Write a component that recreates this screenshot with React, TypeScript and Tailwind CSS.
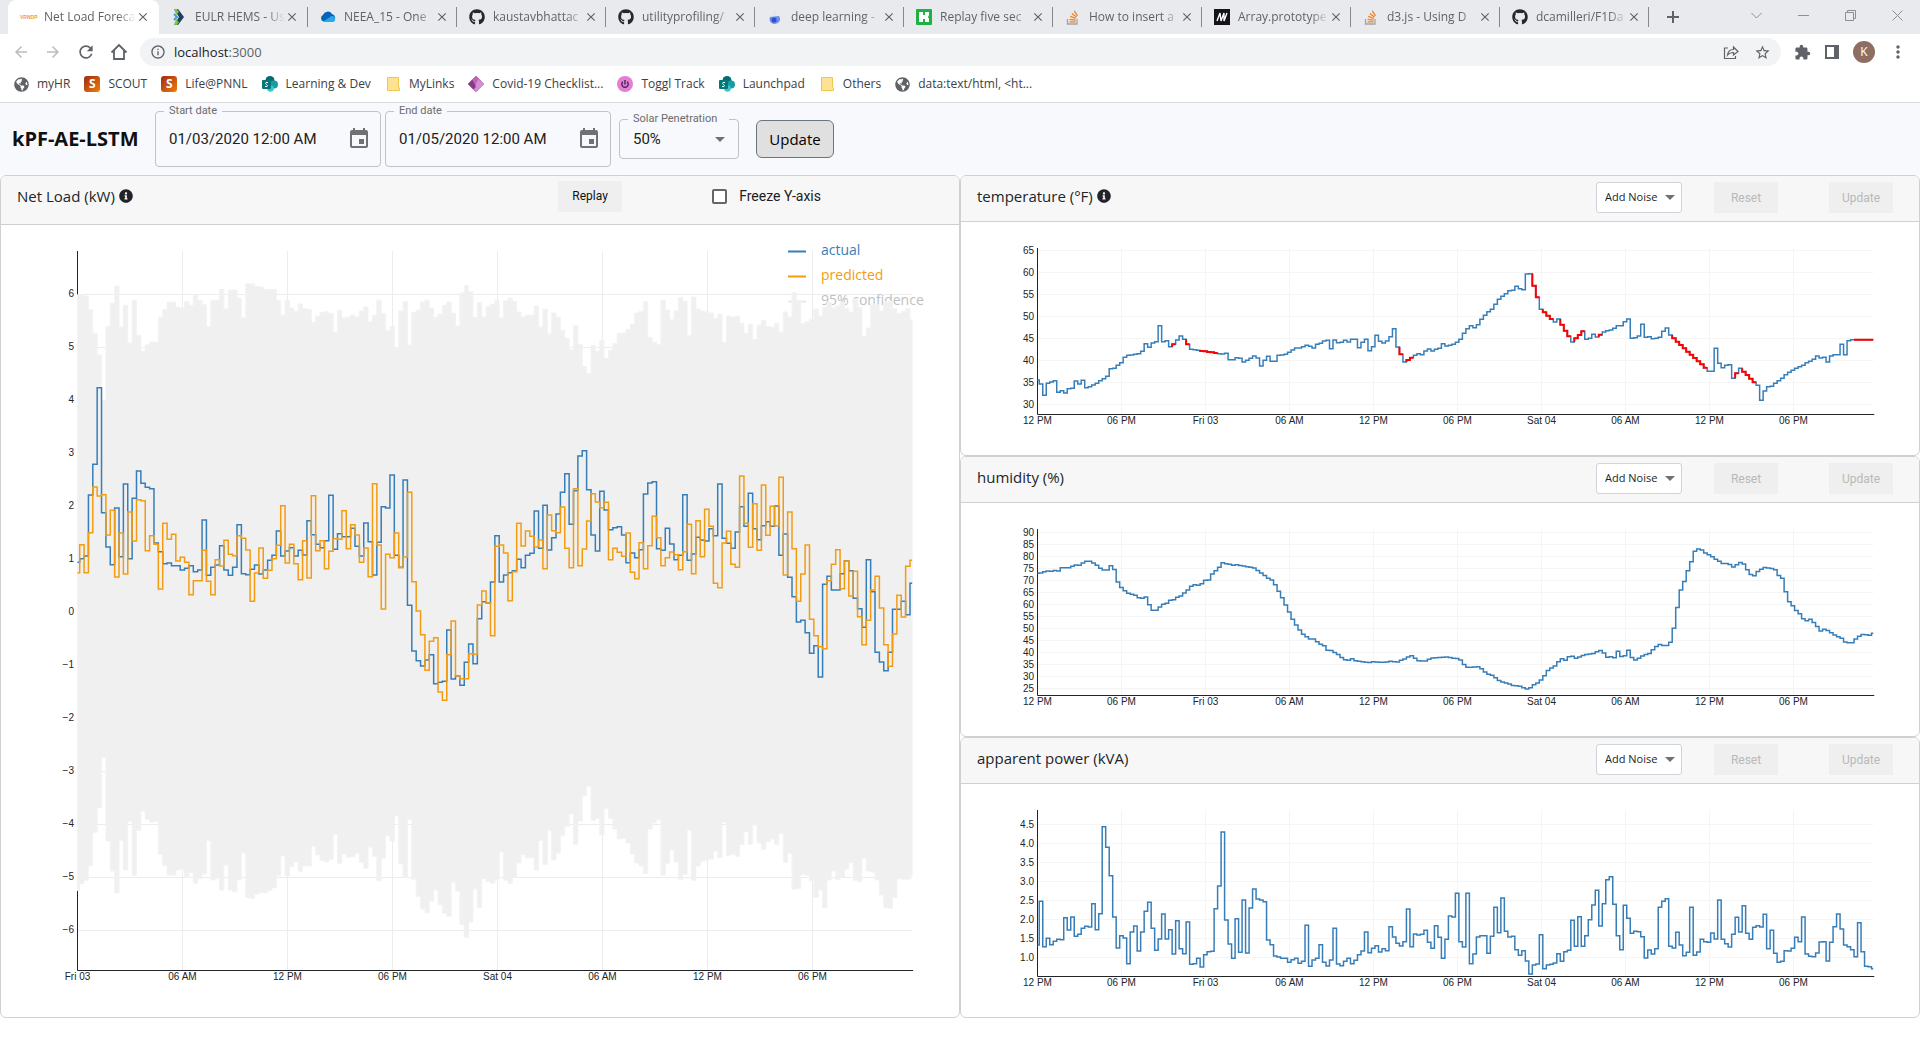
import React from "react";
import { FaGithub, FaGlobeAmericas, FaInfoCircle } from "react-icons/fa";
import {
  MdArrowBack,
  MdArrowForward,
  MdClose,
  MdEvent,
  MdExtension,
  MdInfoOutline,
  MdMoreVert,
  MdRefresh,
  MdStarBorder,
} from "react-icons/md";

const BLUE = "#377eb8";
const ORANGE = "#f39c12";

/* ---------- series: vertical positions on a three-per-pixel plot grid ---------- */

const ACTUAL = [
  997, 986, 978, 795, 703, 473, 848, 951, 1004, 834, 980, 762, 986, 805, 723, 760, 772, 776, 939, 965, 1001, 999, 1007, 1007,
  1020, 1015, 1007, 1025, 1020, 870, 1036, 1012, 1005, 947, 1020, 1036, 1012, 884, 1031, 1034, 1018, 1005, 1032, 1020, 991, 976, 903, 978,
  963, 953, 978, 961, 975, 872, 914, 943, 953, 932, 796, 958, 911, 920, 920, 895, 949, 978, 879, 935, 1035, 937, 830, 834,
  735, 976, 1012, 750, 1126, 1263, 1292, 1308, 1290, 1274, 1361, 1357, 1354, 1200, 1347, 1338, 1366, 1297, 1242, 1301, 1166, 1115, 1119, 1056,
  917, 1056, 1035, 1028, 1022, 988, 1013, 976, 970, 843, 955, 826, 960, 923, 852, 787, 731, 883, 782, 678, 662, 779, 915, 963,
  784, 840, 899, 893, 890, 915, 998, 969, 983, 959, 792, 759, 755, 956, 961, 895, 942, 989, 976, 794, 991, 972, 922, 930,
  933, 896, 917, 762, 925, 940, 955, 906, 830, 889, 790, 896, 929, 887, 875, 889, 828, 976, 912, 1042, 1100, 1176, 1171, 1208,
  1270, 1247, 1341, 1063, 1039, 1080, 1080, 1031, 992, 1022, 1105, 1136, 1192, 989, 1085, 1267, 1296, 1322, 1267, 1138, 1138, 1114, 1154, 1060,
];

const PREDICTED = [
  1028, 944, 1028, 908, 771, 798, 794, 915, 841, 1041, 909, 1032, 846, 933, 809, 812, 962, 917, 943, 1077, 880, 928, 913, 993,
  982, 997, 1094, 1052, 1052, 961, 1054, 1094, 989, 1008, 931, 973, 977, 917, 925, 960, 1114, 1029, 954, 1045, 1021, 986, 946, 827,
  999, 943, 1001, 1049, 932, 1044, 797, 962, 932, 1016, 964, 926, 928, 842, 956, 884, 915, 997, 954, 1040, 761, 945, 1137, 973,
  983, 909, 1013, 981, 787, 1055, 1143, 1214, 1321, 1234, 1223, 1386, 1411, 1274, 1173, 1338, 1346, 1346, 1271, 1273, 1125, 1083, 1119, 1217,
  949, 945, 969, 1112, 1025, 880, 948, 903, 919, 951, 930, 1016, 855, 902, 908, 831, 955, 1013, 776, 1007, 957, 873, 791, 816,
  833, 817, 989, 955, 967, 979, 909, 1027, 1046, 938, 1016, 947, 859, 923, 1007, 983, 966, 974, 1019, 965, 883, 1031, 872, 980,
  838, 889, 1060, 1073, 939, 904, 1003, 1012, 738, 880, 952, 821, 961, 765, 916, 829, 887, 742, 1035, 846, 956, 1114, 1032, 945,
  1168, 1217, 1250, 1256, 1052, 1003, 959, 1076, 993, 1098, 1024, 1160, 1244, 1171, 1080, 1039, 1134, 1244, 1309, 1212, 1096, 1161, 1009, 991,
];

const BAND_TOP = [
  194, 194, 198, 239, 310, 375, 510, 289, 220, 168, 291, 226, 339, 212, 316, 364, 344, 336, 336, 261, 238, 216, 216, 231,
  234, 214, 226, 196, 211, 224, 290, 212, 210, 178, 237, 180, 180, 204, 263, 161, 162, 169, 171, 178, 178, 178, 212, 255,
  212, 234, 244, 222, 236, 238, 277, 259, 247, 245, 250, 307, 241, 264, 261, 255, 261, 243, 231, 275, 256, 210, 250, 302,
  290, 352, 243, 215, 345, 247, 240, 216, 210, 234, 262, 252, 226, 216, 250, 288, 189, 166, 185, 262, 217, 261, 230, 223,
  210, 263, 212, 204, 215, 246, 261, 255, 255, 228, 291, 238, 312, 249, 262, 301, 325, 359, 287, 343, 409, 430, 346, 363,
  331, 385, 361, 340, 309, 309, 298, 283, 249, 244, 215, 322, 337, 344, 210, 240, 269, 243, 202, 214, 317, 201, 237, 243,
  246, 249, 265, 252, 337, 258, 261, 258, 280, 310, 282, 328, 285, 271, 289, 292, 280, 307, 246, 261, 188, 212, 280, 275,
  267, 237, 258, 232, 217, 234, 228, 217, 235, 246, 207, 232, 320, 294, 222, 225, 243, 215, 215, 236, 251, 244, 236, 269,
];

const BAND_BOTTOM = [
  752, 731, 721, 677, 577, 503, 352, 603, 693, 759, 602, 690, 544, 706, 571, 513, 538, 546, 544, 643, 676, 705, 705, 690,
  687, 712, 698, 730, 716, 702, 602, 720, 716, 750, 675, 750, 755, 720, 639, 773, 775, 762, 758, 758, 751, 743, 707, 648,
  708, 680, 666, 694, 678, 678, 618, 644, 662, 666, 658, 583, 670, 642, 652, 650, 640, 667, 685, 621, 649, 722, 655, 587,
  603, 528, 672, 712, 538, 718, 769, 807, 818, 783, 750, 794, 820, 829, 727, 753, 854, 892, 846, 747, 802, 716, 725, 730,
  719, 636, 721, 731, 712, 669, 644, 653, 653, 690, 602, 674, 571, 660, 639, 587, 559, 522, 613, 543, 467, 439, 541, 535,
  585, 506, 535, 567, 597, 595, 609, 642, 669, 678, 700, 567, 549, 539, 705, 670, 630, 666, 718, 703, 570, 721, 678, 664,
  660, 657, 633, 653, 547, 646, 643, 649, 614, 575, 613, 555, 609, 628, 605, 597, 614, 580, 667, 640, 748, 746, 703, 706,
  722, 773, 750, 803, 720, 693, 719, 711, 687, 668, 721, 725, 655, 693, 696, 720, 765, 803, 805, 773, 716, 718, 718, 708,
];

const TEMPERATURE = [
  480, 492, 526, 490, 486, 482, 517, 512, 519, 506, 505, 483, 492, 481, 503, 500, 495, 490, 482, 476, 469, 446, 445, 436,
  428, 412, 406, 405, 403, 401, 394, 371, 382, 369, 365, 317, 365, 362, 380, 373, 360, 348, 358, 373, 388, 389, 391, 393,
  394, 396, 397, 399, 401, 402, 400, 419, 419, 413, 415, 426, 421, 415, 408, 414, 438, 421, 409, 424, 424, 406, 405, 403,
  397, 390, 384, 384, 380, 376, 379, 384, 373, 370, 363, 361, 386, 360, 368, 367, 361, 366, 358, 358, 383, 367, 358, 392,
  380, 346, 364, 369, 363, 350, 326, 381, 403, 426, 420, 413, 406, 401, 404, 393, 387, 393, 388, 385, 371, 378, 376, 373,
  367, 358, 340, 326, 317, 323, 314, 298, 286, 275, 268, 253, 238, 229, 221, 212, 211, 199, 206, 209, 162, 161, 197, 232,
  268, 277, 287, 297, 306, 297, 314, 332, 349, 366, 355, 345, 334, 358, 355, 343, 351, 344, 336, 332, 330, 325, 317, 317,
  305, 297, 355, 353, 348, 313, 352, 350, 356, 355, 352, 334, 324, 345, 355, 365, 375, 385, 395, 404, 414, 424, 433, 443,
  454, 454, 385, 430, 443, 436, 434, 475, 460, 445, 455, 465, 476, 487, 496, 541, 513, 500, 499, 490, 482, 475, 464, 457,
  451, 445, 440, 436, 428, 424, 418, 408, 414, 412, 426, 408, 404, 404, 373, 404, 362, 359, 359, 359, 359, 359, 359, 359,
];

/* sample ranges of the temperature series that were filled in by interpolation */
const FILLED: [number, number][] = [
  [39, 39], [43, 43], [47, 51], [104, 104], [106, 107], [142, 143], [145, 147], [150, 152],
  [154, 156], [161, 161], [182, 191], [200, 200], [202, 205], [234, 239],
];

/* [position, height] knots of the humidity curve */
const HUMIDITY_KNOTS: [number, number][] = [
  [127, 220], [133, 219], [139, 215], [145, 213], [151, 214], [156, 211], [162, 213], [165, 203], [180, 203], [183, 200],
  [188, 195], [197, 196], [204, 184], [212, 183], [217, 188], [222, 191], [227, 202], [233, 208], [240, 214], [246, 196],
  [252, 203], [256, 238], [262, 259], [269, 271], [273, 278], [280, 282], [287, 286], [294, 295], [297, 297], [303, 287],
  [308, 307], [314, 331], [321, 331], [327, 321], [332, 313], [338, 310], [343, 301], [350, 299], [355, 292], [361, 288],
  [367, 279], [372, 271], [377, 260], [383, 254], [390, 256], [395, 252], [401, 241], [406, 243], [412, 223], [418, 213],
  [424, 202], [429, 188], [435, 191], [441, 193], [447, 196], [453, 194], [460, 197], [470, 200], [480, 203], [486, 210],
  [491, 217], [497, 225], [503, 234], [509, 238], [515, 253], [520, 270], [526, 290], [531, 310], [537, 331], [543, 355],
  [549, 373], [554, 387], [560, 401], [566, 409], [572, 417], [578, 417], [583, 424], [589, 432], [595, 436], [600, 451],
  [606, 451], [612, 457], [617, 462], [623, 471], [628, 478], [634, 482], [640, 475], [646, 482], [658, 485], [668, 488],
  [675, 485], [685, 487], [700, 486], [705, 483], [714, 487], [720, 481], [726, 478], [732, 471], [738, 467], [743, 474],
  [749, 482], [760, 484], [766, 478], [772, 474], [783, 473], [795, 471], [805, 474], [817, 477], [823, 492], [828, 502],
  [838, 502], [845, 499], [852, 506], [857, 515], [863, 522], [870, 526], [875, 533], [880, 541], [887, 546], [895, 550],
  [903, 556], [915, 559], [922, 564], [926, 567], [932, 564], [937, 555], [943, 550], [949, 541], [954, 531], [959, 514],
  [965, 505], [971, 501], [977, 487], [983, 475], [988, 484], [994, 471], [1000, 468], [1006, 475], [1012, 471], [1020, 465],
  [1026, 463], [1036, 460], [1041, 455], [1046, 451], [1051, 456], [1057, 472], [1063, 470], [1069, 475], [1074, 450], [1079, 468],
  [1085, 474], [1091, 446], [1097, 471], [1103, 481], [1108, 476], [1114, 469], [1120, 464], [1127, 460], [1131, 451], [1137, 441],
  [1142, 433], [1149, 436], [1154, 438], [1160, 431], [1165, 401], [1171, 334], [1177, 274], [1183, 248], [1188, 218], [1194, 191],
  [1200, 155], [1206, 147], [1212, 150], [1217, 158], [1223, 164], [1229, 170], [1235, 178], [1240, 183], [1245, 191], [1251, 190],
  [1257, 192], [1262, 203], [1268, 196], [1274, 187], [1280, 190], [1285, 205], [1291, 222], [1297, 229], [1303, 215], [1309, 208],
  [1314, 202], [1320, 204], [1331, 206], [1337, 226], [1343, 231], [1348, 268], [1354, 303], [1360, 316], [1366, 331], [1371, 338],
  [1377, 355], [1383, 363], [1388, 356], [1394, 366], [1400, 378], [1406, 393], [1412, 388], [1418, 392], [1423, 398], [1429, 405],
  [1435, 410], [1441, 415], [1446, 426], [1452, 428], [1457, 430], [1463, 418], [1469, 409], [1475, 403], [1487, 406], [1492, 400],
];

const POWER = [
  615, 484, 620, 595, 614, 604, 598, 599, 533, 570, 531, 589, 583, 565, 559, 561, 491, 569, 521, 260, 322, 407, 531, 624,
  587, 594, 671, 576, 558, 633, 576, 514, 487, 565, 631, 597, 522, 597, 569, 642, 542, 626, 641, 546, 673, 671, 655, 681,
  644, 635, 634, 506, 438, 276, 540, 612, 655, 536, 637, 480, 639, 504, 447, 477, 480, 485, 600, 614, 648, 651, 655, 655,
  667, 659, 655, 670, 664, 556, 679, 660, 655, 614, 667, 678, 660, 565, 672, 677, 664, 655, 671, 661, 644, 633, 576, 638,
  625, 617, 636, 626, 632, 560, 591, 610, 618, 605, 507, 620, 582, 585, 583, 571, 607, 625, 557, 592, 655, 598, 528, 531,
  460, 605, 621, 460, 671, 642, 591, 587, 587, 640, 589, 502, 578, 474, 574, 591, 589, 629, 646, 632, 663, 702, 675, 672,
  584, 686, 675, 673, 669, 641, 664, 635, 631, 541, 619, 530, 619, 587, 539, 495, 451, 558, 491, 419, 410, 493, 587, 629,
  496, 535, 580, 574, 575, 590, 654, 630, 642, 626, 502, 484, 476, 619, 624, 577, 615, 647, 637, 502, 646, 636, 598, 605,
  607, 579, 597, 480, 598, 611, 621, 583, 532, 576, 497, 580, 598, 562, 557, 561, 523, 626, 571, 640, 667, 664, 632, 633,
  625, 592, 605, 531, 642, 649, 650, 639, 606, 605, 663, 607, 560, 522, 567, 615, 620, 629, 650, 548, 635, 679, 680, 686,
];

function humiditySeries(count: number) {
  const first = HUMIDITY_KNOTS[0][0];
  const last = HUMIDITY_KNOTS[HUMIDITY_KNOTS.length - 1][0];
  return Array.from({ length: count }, (_, i) => {
    const at = first + ((last - first) * i) / (count - 1);
    let k = 1;
    while (k < HUMIDITY_KNOTS.length - 1 && HUMIDITY_KNOTS[k][0] < at) k++;
    const [x0, y0] = HUMIDITY_KNOTS[k - 1];
    const [x1, y1] = HUMIDITY_KNOTS[k];
    return y0 + ((y1 - y0) * (at - x0)) / (x1 - x0);
  });
}

type Pt = [number, number];

/* step curve: the level changes half way between neighbouring samples */
function stepPoints(ys: number[], x0: number, dx: number, offset: number): Pt[] {
  const pts: Pt[] = [];
  ys.forEach((v, i) => {
    const y = v / 3 + offset;
    pts.push([i === 0 ? x0 : x0 + (i - 0.5) * dx, y]);
    pts.push([i === ys.length - 1 ? x0 + i * dx : x0 + (i + 0.5) * dx, y]);
  });
  return pts;
}

const toPath = (pts: Pt[]) => "M" + pts.map(([x, y]) => `${x.toFixed(2)},${y.toFixed(2)}`).join("L");

const TICK = "font-['Liberation_Sans',sans-serif] text-[10px] fill-[#212529]";
const UI = "font-['Open_Sans',sans-serif]";

/* ---------- charts ---------- */

function NetLoadChart() {
  const x0 = 76.5;
  const dx = 4.37;
  const end = x0 + 191 * dx;
  const axisY = 745.5;
  const top = stepPoints(BAND_TOP, x0, dx, 5);
  const bottom = stepPoints(BAND_BOTTOM, x0, dx, 415).reverse();
  const hours = ["Fri 03", "06 AM", "12 PM", "06 PM", "Sat 04", "06 AM", "12 PM", "06 PM"];
  const levels = [6, 5, 4, 3, 2, 1, 0, -1, -2, -3, -4, -5, -6];
  return (
    <svg viewBox="0 0 958 792" className="block h-auto w-full" role="img" aria-label="Net load chart">
      {hours.map((_, i) => (
        <path key={i} d={`M${x0 + i * 105},26V745`} stroke="#ececec" />
      ))}
      {levels.map((v) => (
        <path key={v} d={`M${x0},${388 - Math.round(v * 53) - 0.5}H${end}`} stroke="#ececec" />
      ))}
      <path d={`M${x0},26V${axisY}H${end + 1}`} fill="none" stroke="#212529" />
      {hours.map((t, i) => (
        <text key={i} x={x0 + i * 105} y={755} textAnchor="middle" className={TICK}>{t}</text>
      ))}
      {levels.map((v) => (
        <text key={v} x={73} y={390 - Math.round(v * 53)} textAnchor="end" className={TICK}>
          {v < 0 ? `−${-v}` : v}
        </text>
      ))}
      <path d="M787,26.5H805" stroke={BLUE} strokeWidth="2" />
      <path d="M787,51.5H805" stroke={ORANGE} strokeWidth="2" />
      <path d="M787,76.5H805" stroke="#e8e8e8" strokeWidth="2" />
      <text x={820} y={30} fill={BLUE} className={`${UI} text-[14px]`}>actual</text>
      <text x={820} y={55} fill={ORANGE} className={`${UI} text-[14px]`}>predicted</text>
      <text x={820} y={80} fill="#c0c0c0" className={`${UI} text-[14px]`}>95% confidence</text>
      <path d={toPath([...top, ...bottom]) + "Z"} fill="#f0f0f0" stroke="#f3f3f3" strokeWidth="1" />
      <path d={toPath(stepPoints(ACTUAL, x0, dx, 5))} fill="none" stroke={BLUE} strokeWidth="1.5" />
      <path d={toPath(stepPoints(PREDICTED, x0, dx, 5))} fill="none" stroke={ORANGE} strokeWidth="1.5" />
    </svg>
  );
}

interface SensorChartProps {
  name: string;
  values: number[];
  offset: number;
  labels: string[];
  firstTick: number;
  tickStep: number;
  filled?: [number, number][];
}

function SensorChart({ name, values, offset, labels, firstTick, tickStep, filled = [] }: SensorChartProps) {
  const x0 = 76.5;
  const dx = 3.497;
  const end = x0 + 239 * dx;
  const axisY = 192.5;
  const hours = ["12 PM", "06 PM", "Fri 03", "06 AM", "12 PM", "06 PM", "Sat 04", "06 AM", "12 PM", "06 PM"];
  const pts = stepPoints(values, x0, dx, offset);
  return (
    <svg viewBox="0 0 958 233" className="block h-auto w-full" role="img" aria-label={`${name} chart`}>
      {hours.map((_, i) => (
        <path key={i} d={`M${Math.floor(x0 + i * 84) + 0.5},26V192`} stroke="#f5f5f5" />
      ))}
      {labels.map((v, i) => (
        <path key={v} d={`M${x0},${firstTick + i * tickStep + 0.5}H${end}`} stroke="#f5f5f5" />
      ))}
      <path d={`M${x0},26V${axisY}H${end + 1}`} fill="none" stroke="#212529" />
      {hours.map((t, i) => (
        <text key={i} x={x0 + i * 84} y={202} textAnchor="middle" className={TICK}>{t}</text>
      ))}
      {labels.map((v, i) => (
        <text key={v} x={73} y={firstTick + i * tickStep + 4} textAnchor="end" className={TICK}>{v}</text>
      ))}
      <path d={toPath(pts)} fill="none" stroke={BLUE} strokeWidth="1.5" />
      {filled.map(([a, b]) => (
        <path key={a} d={toPath(pts.slice(Math.max(0, a * 2 - 1), b * 2 + 2))} fill="none" stroke="#ff0000" strokeWidth="2" />
      ))}
    </svg>
  );
}

/* ---------- browser chrome ---------- */

function VrndpIcon() {
  return <span className="w-4 shrink-0 text-center font-['Liberation_Sans',sans-serif] text-[5px] leading-4 font-bold text-[#f39c3c]">VRNDP</span>;
}

function EulrIcon() {
  return (
    <svg viewBox="0 0 16 16" className="size-4 shrink-0">
      <path d="M3 0h4l6 8-6 8H3l5-8z" fill="#1e3f63" />
      <path d="M3 0h3l2 3-3 3 1 2-1 2 3 3-2 3H3l3-8z" fill="#7cc243" />
      <path d="M3 5l3 3-3 3" fill="none" stroke="#3c9fd6" strokeWidth="2" />
    </svg>
  );
}

function OneDriveIcon() {
  return (
    <svg viewBox="0 0 16 16" className="size-4 shrink-0">
      <path d="M3.500 12.500A3.500 3.500 0 0 1 3 6a5 5 0 0 1 9-1 4 4 0 0 1 1 7.500z" fill="#0364b8" />
      <path d="M5 13a3 3 0 0 1-1-1l6-4a3 3 0 0 1 5 1 3 3 0 0 1-2 4z" fill="#28a8ea" />
    </svg>
  );
}

function FlaskIcon() {
  return (
    <svg viewBox="0 0 16 16" className="size-4 shrink-0">
      <path d="M6 1h3v5l2 4a4 4 0 0 1-8 0l3-4z" fill="#dfe5fb" />
      <path d="M3 8l9-1a5 5 0 0 1-4 8 5 5 0 0 1-5-7z" fill="#6f8df0" />
      <circle cx="7" cy="11" r="2.500" fill="#2f50cc" />
    </svg>
  );
}

function ReplayIcon() {
  return (
    <svg viewBox="0 0 16 16" className="size-4 shrink-0">
      <rect width="16" height="16" rx="1" fill="#1fb141" />
      <path d="M3 3h4v3h2V3h4v3l-1 2 1 2v3H9v-3H7v3H3z" fill="#fff" />
    </svg>
  );
}

function MdnIcon() {
  return (
    <svg viewBox="0 0 16 16" className="size-4 shrink-0">
      <rect width="16" height="16" fill="#15141a" />
      <path d="M3 12l3-8 1 8 3-8 0 8 3-8" fill="none" stroke="#fff" strokeWidth="1.400" />
    </svg>
  );
}

function StackIcon() {
  return (
    <svg viewBox="0 0 16 16" className="size-4 shrink-0" fill="none">
      <path d="M2.500 10v5h9.500v-5" stroke="#a0a4a8" strokeWidth="1.300" />
      <path d="M4.500 12.800h6M4.600 10.300l6 .8M5.200 7.400l5.600 2M6.800 4.400l4.700 3.500M9.300 1.800l3.200 5" stroke="#f48024" strokeWidth="1.300" />
    </svg>
  );
}

const Github = () => <FaGithub className="size-4 shrink-0 text-[#24292f]" />;

const TABS: { title: string; Icon: () => React.ReactElement }[] = [
  { title: "Net Load Foreca", Icon: VrndpIcon },
  { title: "EULR HEMS - Us", Icon: EulrIcon },
  { title: "NEEA_15 - One", Icon: OneDriveIcon },
  { title: "kaustavbhattac", Icon: Github },
  { title: "utilityprofiling/", Icon: Github },
  { title: "deep learning -", Icon: FlaskIcon },
  { title: "Replay five sec", Icon: ReplayIcon },
  { title: "How to insert a", Icon: StackIcon },
  { title: "Array.prototype", Icon: MdnIcon },
  { title: "d3.js - Using D", Icon: StackIcon },
  { title: "dcamilleri/F1Da", Icon: Github },
];

function TabStrip() {
  return (
    <div className="flex h-[34px] items-center bg-[#e8eaed] pl-2">
      {TABS.map(({ title, Icon }, i) => (
        <div
          key={title}
          className={
            i === 0
              ? "flex h-full w-[151px] items-center rounded-t-lg bg-white pr-[9px] pl-3"
              : i === 1
                ? "flex h-5 w-[149px] items-center border-r border-[#85898e] pr-2 pl-3"
                : "flex h-5 w-[149px] items-center border-r border-[#85898e] pr-[7px] pl-3"
          }
        >
          <Icon />
          <span className="ml-2 min-w-0 flex-1 overflow-hidden mask-r-from-80% text-[12px] leading-5 whitespace-nowrap text-[#5f6368]">
            {title}
          </span>
          <button type="button" aria-label={`Close ${title}`} className="text-[#5f6368]">
            <MdClose className="size-[14px]" />
          </button>
        </div>
      ))}
      <button type="button" aria-label="New tab" className="ml-[17px] text-[#5f6368]">
        <svg viewBox="0 0 14 14" className="size-[14px]"><path d="M7 1v12M1 7h12" stroke="currentColor" strokeWidth="2" /></svg>
      </button>
      <div className="mb-1 ml-auto flex items-center gap-9 pr-[17px] text-[#8b8f94]">
        <button type="button" aria-label="Search tabs">
          <svg viewBox="0 0 11 11" className="size-[11px]" fill="none" stroke="currentColor"><path d="M.5 3l5 5 5-5" /></svg>
        </button>
        <button type="button" aria-label="Minimize">
          <svg viewBox="0 0 11 11" className="size-[11px]" fill="none" stroke="currentColor"><path d="M0 5.500h11" /></svg>
        </button>
        <button type="button" aria-label="Restore">
          <svg viewBox="0 0 11 11" className="size-[11px]" fill="none" stroke="currentColor"><path d="M.5 2.500h8v8h-8zM2.500 2.500v-2h8v8h-2" /></svg>
        </button>
        <button type="button" aria-label="Close window">
          <svg viewBox="0 0 11 11" className="size-[11px]" fill="none" stroke="currentColor"><path d="M.5.5l10 10M10.500.5l-10 10" /></svg>
        </button>
      </div>
    </div>
  );
}

function Toolbar() {
  return (
    <div className="flex h-9 items-center bg-white pl-3 text-[#5f6368]">
      <div className="flex w-32 items-center gap-[14px]">
        <button type="button" aria-label="Back" className="text-[#babcbe]"><MdArrowBack className="size-[18px]" /></button>
        <button type="button" aria-label="Forward" className="text-[#babcbe]"><MdArrowForward className="size-[18px]" /></button>
        <button type="button" aria-label="Reload"><MdRefresh className="size-5" /></button>
        <button type="button" aria-label="Home">
          <svg viewBox="0 0 18 18" className="size-[18px]" fill="none" stroke="currentColor" strokeWidth="1.800">
            <path d="M1.500 9.500L9 2l7.500 7.500M4 7.500V16h10V7.500" />
          </svg>
        </button>
      </div>
      <div className="flex h-7 min-w-0 flex-1 items-center rounded-full bg-[#f1f3f4] px-[10px]">
        <MdInfoOutline className="size-4 shrink-0" />
        <a href="http://localhost:3000" className="ml-2 text-[13px] leading-5 text-[#5f6368]">
          <span className="text-[#202124]">localhost</span>:3000
        </a>
        <div className="ml-auto flex items-center gap-[15px]">
          <button type="button" aria-label="Share">
            <svg viewBox="0 0 16 16" className="size-4" fill="none" stroke="currentColor" strokeWidth="1.200">
              <path d="M5 4H1.500v10.500h11V12M4.500 11c.5-4 2.500-5.500 6-5.500V3l4.500 4.500L10.500 11V8.500c-3 0-4.500.5-6 2.500z" />
            </svg>
          </button>
          <button type="button" aria-label="Bookmark this page"><MdStarBorder className="size-[17px]" /></button>
        </div>
      </div>
      <div className="flex items-center gap-[13px] pr-3 pl-[13px]">
        <button type="button" aria-label="Extensions"><MdExtension className="size-[17px]" /></button>
        <button type="button" aria-label="Side panel">
          <svg viewBox="0 0 16 16" className="size-4"><path d="M1 1h14v14H1zM3 3v10h7V3z" fill="currentColor" fillRule="evenodd" /></svg>
        </button>
        <button type="button" aria-label="Profile" className="size-[22px] rounded-full bg-[#8d6e63] text-[12px] leading-[22px] text-white">K</button>
        <button type="button" aria-label="Menu"><MdMoreVert className="size-5" /></button>
      </div>
    </div>
  );
}

const Globe = () => <FaGlobeAmericas className="size-[15px] shrink-0 text-[#5f6368]" />;

function ScoutIcon() {
  return (
    <span className="size-4 shrink-0 rounded-[3px] bg-linear-to-br from-[#9c2a12] to-[#f57c00] text-center text-[12px] leading-4 font-bold text-white">S</span>
  );
}

function SharePointIcon() {
  return (
    <svg viewBox="0 0 16 16" className="size-4 shrink-0">
      <circle cx="8" cy="4.500" r="4.500" fill="#036c70" />
      <circle cx="12" cy="8.500" r="4" fill="#1a9ba1" />
      <circle cx="8.500" cy="12.500" r="3.300" fill="#37c6d0" />
      <rect x="0" y="4" width="9" height="9" rx="1" fill="#03787c" />
      <path d="M6 6.500H4q-1 1 .5 2t.5 2H3" fill="none" stroke="#fff" strokeWidth="1" />
    </svg>
  );
}

function FolderIcon() {
  return (
    <svg viewBox="0 0 16 16" className="size-4 shrink-0">
      <path d="M2.500 1.500h11v9.500l1 1v2.500h-12z" fill="#fde293" stroke="#edc84a" />
    </svg>
  );
}

function PowerAppsIcon() {
  return (
    <svg viewBox="0 0 16 16" className="size-4 shrink-0">
      <path d="M8 0l8 8-8 8-8-8z" fill="#742774" />
      <path d="M8 0l5 5-5 6-4-7z" fill="#c060b8" />
      <path d="M10 3l6 5-8 8-2-3z" fill="#d68fd0" />
      <path d="M0 8l4-4 4 7-3 2z" fill="#8a3a8a" />
    </svg>
  );
}

function TogglIcon() {
  return (
    <svg viewBox="0 0 16 16" className="size-4 shrink-0">
      <circle cx="8" cy="8" r="8" fill="#e57cd8" />
      <path d="M8 4v4.500M5.800 5.800a3.200 3.200 0 1 0 4.400 0" fill="none" stroke="#412a4c" strokeWidth="1.400" />
    </svg>
  );
}

const BOOKMARKS: { label: string; Icon: () => React.ReactElement }[] = [
  { label: "myHR", Icon: Globe },
  { label: "SCOUT", Icon: ScoutIcon },
  { label: "Life@PNNL", Icon: ScoutIcon },
  { label: "Learning & Dev", Icon: SharePointIcon },
  { label: "MyLinks", Icon: FolderIcon },
  { label: "Covid-19 Checklist...", Icon: PowerAppsIcon },
  { label: "Toggl Track", Icon: TogglIcon },
  { label: "Launchpad", Icon: SharePointIcon },
  { label: "Others", Icon: FolderIcon },
  { label: "data:text/html, <ht...", Icon: Globe },
];

function BookmarkBar() {
  return (
    <nav className="flex h-[33px] items-center gap-[14px] border-b border-[#dadce0] bg-white pb-1 pl-[14px]">
      {BOOKMARKS.map(({ label, Icon }) => (
        <a key={label} href="#" className="flex items-center gap-2 text-[12px] leading-4 whitespace-nowrap text-[#3c4043]">
          <Icon />
          {label}
        </a>
      ))}
    </nav>
  );
}

/* ---------- dashboard ---------- */

function DateField({ id, label, value }: { id: string; label: string; value: string }) {
  return (
    <div className="relative flex h-14 w-[226px] items-center rounded border border-[#c0c2c5] pr-[9px] pl-[13px] font-['Roboto',sans-serif]">
      <label htmlFor={id} className="absolute -top-[9px] left-2 bg-[#f8f9fc] px-[5px] text-[11px] leading-4 text-[#6b6c6e]">{label}</label>
      <input id={id} type="text" defaultValue={value} className="min-w-0 flex-1 bg-transparent text-[15px] text-[#212121] outline-none" />
      <button type="button" aria-label={`Choose ${label.toLowerCase()}`} className="text-[#707173]">
        <MdEvent className="size-6" />
      </button>
    </div>
  );
}

function Caret({ className }: { className: string }) {
  return (
    <svg viewBox="0 0 10 5" className={className} aria-hidden="true"><path d="M0 0h10L5 5z" fill="#707173" /></svg>
  );
}

function AppHeader() {
  return (
    <header className="flex h-[72px] items-center bg-[#f8f9fc] pl-3">
      <h1 className="w-[143px] text-[20px] leading-7 font-bold whitespace-nowrap text-[#111]">kPF-AE-LSTM</h1>
      <div className="flex items-center gap-1">
        <DateField id="start" label="Start date" value="01/03/2020 12:00 AM" />
        <DateField id="end" label="End date" value="01/05/2020 12:00 AM" />
      </div>
      <div className="relative ml-2 h-10 w-[120px] rounded border border-[#c0c2c5] font-['Roboto',sans-serif]">
        <label htmlFor="solar" className="absolute -top-[9px] left-2 bg-[#f8f9fc] pr-3 pl-[5px] text-[11px] leading-4 whitespace-nowrap text-[#6b6c6e]">Solar Penetration</label>
        <select id="solar" defaultValue="50%" className="h-full w-full appearance-none bg-transparent pl-[13px] text-[15px] text-[#212121] outline-none">
          <option>50%</option>
        </select>
        <Caret className="pointer-events-none absolute top-[17px] right-[13px] w-[10px]" />
      </div>
      <button type="button" className="ml-[17px] h-[38px] w-[78px] rounded-md border border-[#6c757d] bg-[#e0e0e0] text-[15px] text-black">Update</button>
    </header>
  );
}

function SensorCard({ title, info, children }: { title: string; info?: boolean; children: React.ReactNode }) {
  return (
    <section className="overflow-hidden rounded-md border border-[#cfd0d1] bg-white">
      <div className="flex h-[46px] items-center border-b border-[#cfd0d1] bg-[#f7f7f7] pr-[26px] pb-[2px] pl-4">
        <h2 className="mb-[3px] flex items-center gap-1 text-[15px] leading-6 text-[#212529]">
          {title}
          {info && <FaInfoCircle className="size-[14px]" />}
        </h2>
        <div className="relative mr-8 ml-auto h-[31px] w-[86px]">
          <select aria-label={`Add noise to ${title}`} className="h-full w-full appearance-none rounded-[3px] border border-[#ced4da] bg-white pl-2 text-[11px] text-[#212529] outline-none">
            <option>Add Noise</option>
          </select>
          <Caret className="pointer-events-none absolute top-[13px] right-[7px] w-[10px]" />
        </div>
        <button type="button" disabled className="mr-[51px] h-[31px] w-16 bg-[#efefef] font-['Roboto',sans-serif] text-[12px] text-[#b9b9b9]">Reset</button>
        <button type="button" disabled className="h-[31px] w-16 bg-[#efefef] font-['Roboto',sans-serif] text-[12px] text-[#b9b9b9]">Update</button>
      </div>
      {children}
    </section>
  );
}

function NetLoadCard() {
  return (
    <section className="overflow-hidden rounded-md border border-[#cfd0d1] bg-white">
      <div className="flex h-[49px] items-center border-b border-[#cfd0d1] bg-[#f7f7f7] pr-[138px] pb-2 pl-4">
        <h2 className="flex items-center gap-1 text-[15px] leading-6 text-[#212529]">
          Net Load (kW)
          <FaInfoCircle className="size-[14px]" />
        </h2>
        <button type="button" className="mr-[90px] ml-auto h-[31px] w-16 bg-[#efefef] font-['Roboto',sans-serif] text-[12px] text-[#111]">Replay</button>
        <label className="flex items-center gap-3 font-['Roboto',sans-serif] text-[14px] leading-6 text-[#212121]">
          <input type="checkbox" className="size-[15px] appearance-none rounded-[2px] border-2 border-[#666] bg-white" />
          Freeze Y-axis
        </label>
      </div>
      <NetLoadChart />
    </section>
  );
}

const TEMPERATURE_TICKS = ["65", "60", "55", "50", "45", "40", "35", "30"];
const HUMIDITY_TICKS = ["90", "85", "80", "75", "70", "65", "60", "55", "50", "45", "40", "35", "30", "25"];
const POWER_TICKS = ["4.5", "4.0", "3.5", "3.0", "2.5", "2.0", "1.5", "1.0"];

export default function App() {
  return (
    <div className="min-h-screen bg-white font-['Open_Sans',sans-serif]">
      <TabStrip />
      <Toolbar />
      <BookmarkBar />
      <AppHeader />
      <main className="grid grid-cols-2 items-start">
        <NetLoadCard />
        <div className="flex flex-col">
          <SensorCard title="temperature (°F)" info>
            <SensorChart name="temperature" values={TEMPERATURE} offset={-2} labels={TEMPERATURE_TICKS} firstTick={28} tickStep={22} filled={FILLED} />
          </SensorCard>
          <SensorCard title="humidity (%)">
            <SensorChart name="humidity" values={humiditySeries(240)} offset={-3} labels={HUMIDITY_TICKS} firstTick={29} tickStep={12} />
          </SensorCard>
          <SensorCard title="apparent power (kVA)">
            <SensorChart name="apparent power" values={POWER} offset={-44} labels={POWER_TICKS} firstTick={40} tickStep={19} />
          </SensorCard>
        </div>
      </main>
    </div>
  );
}
